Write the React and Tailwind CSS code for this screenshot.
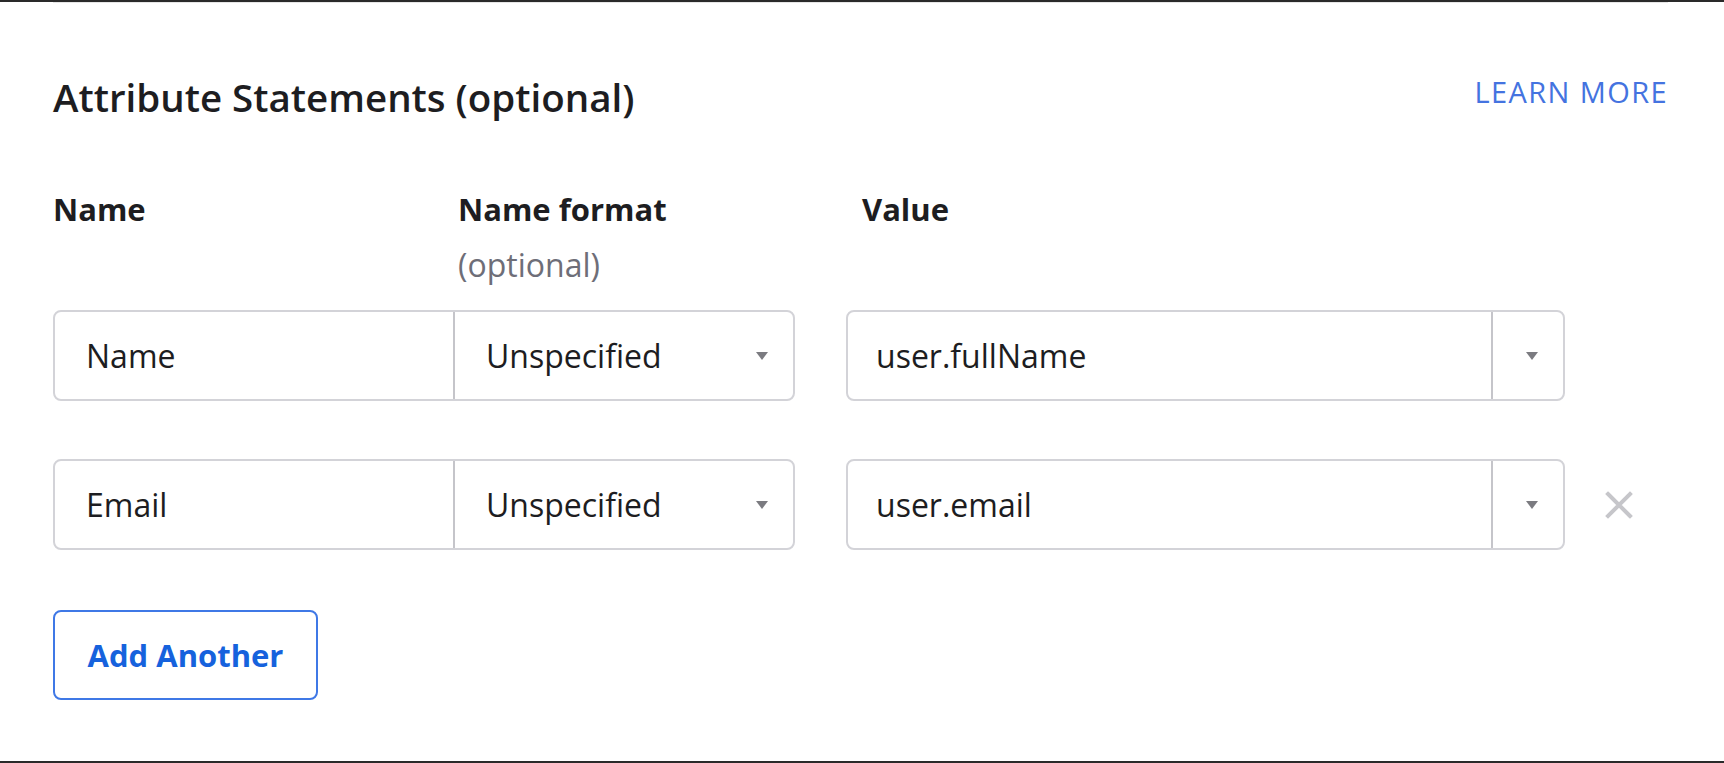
import React from "react";

const Caret = ({ className = "" }) => (
  <svg width="14" height="10" viewBox="0 0 14 10" className={className}>
    <polygon points="1,1 13,1 7,9" fill="#7b7b80" />
  </svg>
);

const Row = ({ name, value, removable }) => (
  <div className="flex items-center">
    {/* name + format pair */}
    <div className="flex h-[91px] w-[742px] rounded-lg border-2 border-[#d3d3d8]">
      <div className="flex w-[398px] items-center pl-[31px] text-[32px] text-[#1d1d21]">
        {name}
      </div>
      <div className="flex flex-1 items-center justify-between border-l-2 border-[#c5c5ca] pl-[31px] pr-[24px] text-[32px] text-[#1d1d21]">
        <span>Unspecified</span>
        <Caret />
      </div>
    </div>

    {/* value */}
    <div className="ml-[51px] flex h-[91px] w-[719px] rounded-lg border-2 border-[#d3d3d8]">
      <div className="flex w-[643px] items-center pl-[28px] text-[32px] text-[#1d1d21]">
        {value}
      </div>
      <div className="flex flex-1 items-center justify-center border-l-2 border-[#c5c5ca] pl-2">
        <Caret />
      </div>
    </div>

    {removable && (
      <button className="ml-[40px] flex h-[28px] w-[28px] items-center justify-center">
        <svg width="28" height="28" viewBox="0 0 28 28">
          <path d="M3 3 L25 25 M25 3 L3 25" stroke="#c6c6ca" strokeWidth="4" strokeLinecap="square" />
        </svg>
      </button>
    )}
  </div>
);

export default function App() {
  return (
    <div
      className="box-border h-[763px] w-full border-y-2 border-[#2a2a2a] bg-white"
      style={{ fontFamily: '"Open Sans", "Liberation Sans", sans-serif' }}
    >
      <div className="ml-[53px] mr-[56px] h-px bg-[#e6e6e6]" />

      <div className="pl-[53px] pr-[56px]">
        {/* header */}
        <div className="mt-[75px] flex items-start justify-between">
          <h2 className="text-[38.5px] font-semibold leading-[38px] text-[#1d1d21]">
            Attribute Statements (optional)
          </h2>
          <a className="mt-[-1px] text-[29px] leading-[29px] tracking-[1.4px] text-[#4473e0]">
            LEARN MORE
          </a>
        </div>

        {/* column labels */}
        <div className="mt-[78px] flex text-[31px] leading-[31px]">
          <div className="w-[405px] font-bold text-[#1d1d21]">Name</div>
          <div className="w-[404px]">
            <div className="font-bold text-[#1d1d21]">Name format</div>
            <div className="mt-[24px] text-[32px] text-[#6e6e78]">(optional)</div>
          </div>
          <div className="font-bold text-[#1d1d21]">Value</div>
        </div>

        {/* rows */}
        <div className="mt-[30px] flex flex-col gap-[58px]">
          <Row name="Name" value="user.fullName" />
          <Row name="Email" value="user.email" removable />
        </div>

        <button className="mt-[60px] h-[90px] w-[265px] rounded-lg border-2 border-[#3f78e6] text-[31px] font-bold text-[#1662dd]">
          Add Another
        </button>
      </div>
    </div>
  );
}
